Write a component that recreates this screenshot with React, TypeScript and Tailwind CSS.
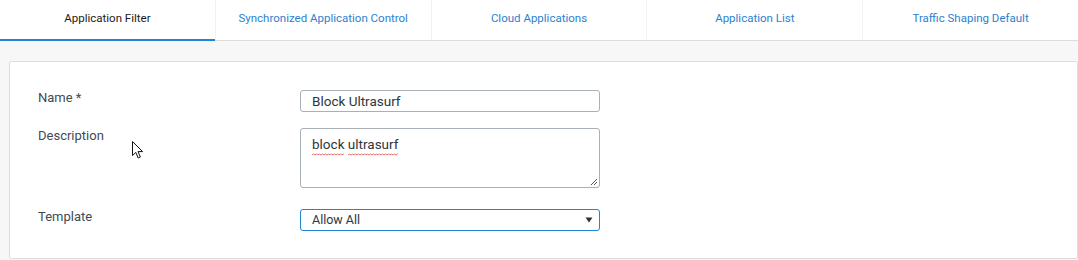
import React from 'react';

const tabs = [
  'Application Filter',
  'Synchronized Application Control',
  'Cloud Applications',
  'Application List',
  'Traffic Shaping Default',
];

function Cursor() {
  return (
    <svg
      className="absolute left-[131px] top-[140px]"
      width="14"
      height="20"
      viewBox="0 0 14 20"
    >
      <path
        d="M1.5 1.5 L1.5 15.5 L4.8 12.4 L7.2 18 L9.4 17 L7 11.6 L11.6 11.6 Z"
        fill="#fff"
        stroke="#111"
        strokeWidth="1"
        strokeLinejoin="miter"
      />
    </svg>
  );
}

// red spell-check wave under a word
function Misspelled({ word }: { word: string }) {
  return (
    <span className="relative inline-block">
      {word}
      <svg className="absolute left-0 -bottom-[2px] w-full h-[3px]" preserveAspectRatio="none">
        <defs>
          <pattern id="wave" width="3" height="3" patternUnits="userSpaceOnUse">
            <path d="M0 2 L1.5 1 L3 2" fill="none" stroke="#e03030" strokeWidth="0.7" />
          </pattern>
        </defs>
        <rect width="100%" height="3" fill="url(#wave)" />
      </svg>
    </span>
  );
}

export default function App() {
  const active = 0;

  return (
    <div className="relative w-[1078px] h-[260px] bg-[#f7f7f7] overflow-hidden font-['Roboto',sans-serif]">
      {/* Tabs */}
      <div className="flex h-[41px] bg-white border-b border-[#dcdcdc]">
        {tabs.map((t, i) => (
          <div
            key={t}
            className={
              i === active
                ? 'flex-1 flex items-center justify-center text-[11.5px] text-[#1a1a1a] border-b-2 border-[#1f86d0] -mb-px pb-[2px]'
                : 'flex-1 flex items-center justify-center text-[11.5px] text-[#2d7fd0] border-l border-[#f2f2f2] pb-[2px]'
            }
          >
            {t}
          </div>
        ))}
      </div>

      {/* Form card */}
      <div className="ml-[9px] mt-[20px] h-[198px] bg-white border border-[#dedede] rounded-[2px] pl-[28px] pt-[28px] text-[13px] text-[#3f4a55]">
        <div className="flex items-start">
          <div className="w-[262px] -mt-[2px]">Name *</div>
          <div className="w-[300px] h-[22px] border border-[#a9b0b7] rounded-[3px] flex items-center px-[11px] text-[13.5px] text-[#2e3640]">
            Block Ultrasurf
          </div>
        </div>

        <div className="flex items-start mt-[16px]">
          <div className="w-[262px] -mt-[2px]">Description</div>
          <div className="relative w-[300px] h-[60px] border border-[#a9b0b7] rounded-[3px] px-[11px] pt-[5px] text-[13.5px] text-[#2e3640]">
            <Misspelled word="block" /> <Misspelled word="ultrasurf" />
            <svg className="absolute right-[1px] bottom-[1px]" width="9" height="9" viewBox="0 0 9 9">
              <path d="M8 2 L2 8 M8 5 L5 8" stroke="#555" strokeWidth="1" />
            </svg>
          </div>
        </div>

        <div className="flex items-start mt-[21px]">
          <div className="w-[262px] -mt-[2px]">Template</div>
          <div className="w-[300px] h-[22px] border border-[#1f86d0] rounded-[3px] flex items-center justify-between pl-[11px] pr-[6px] text-[12.5px] text-[#2e3640]">
            <span>Allow All</span>
            <svg width="8" height="6" viewBox="0 0 8 6">
              <path d="M0.5 0.5 L7.5 0.5 L4 5.5 Z" fill="#333" />
            </svg>
          </div>
        </div>
      </div>

      <Cursor />
    </div>
  );
}
